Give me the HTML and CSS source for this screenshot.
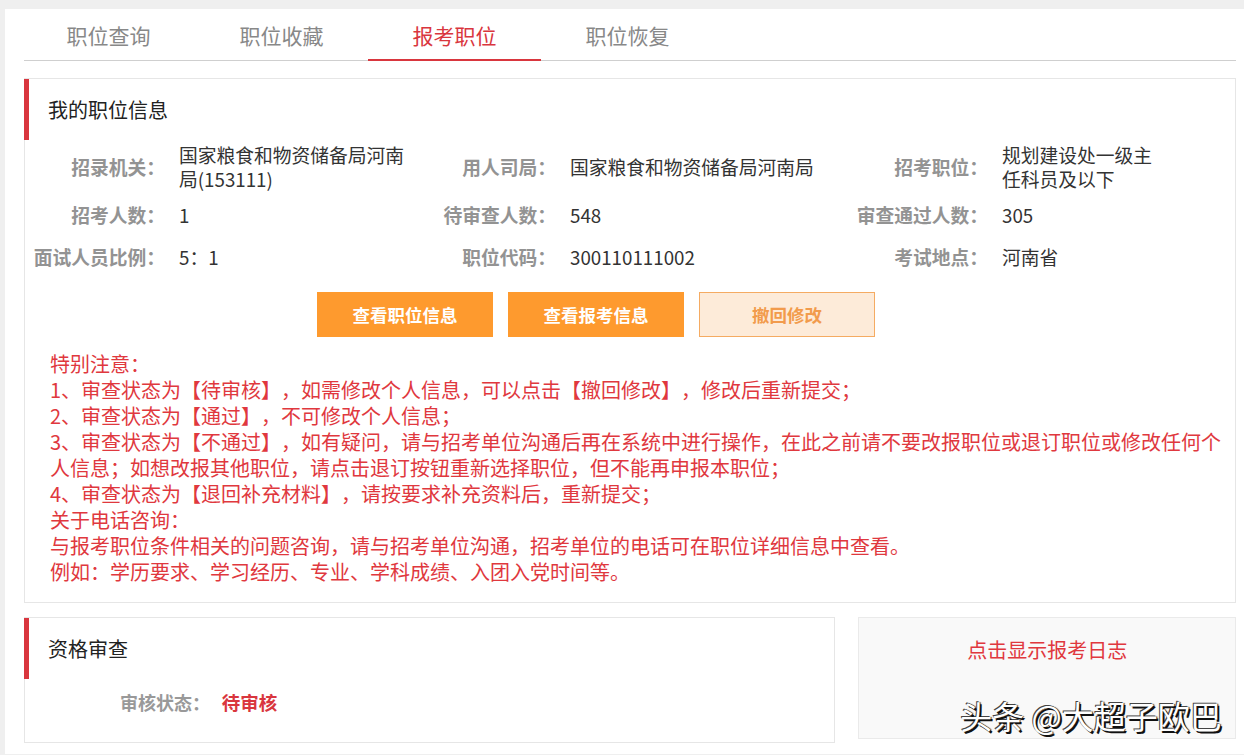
FILE: index.html
```html
<!DOCTYPE html>
<html lang="zh-CN">
<head>
    <meta charset="UTF-8">
    <meta name="viewport" content="width=device-width, initial-scale=1.0">
    <title>报考职位</title>
    <link rel="stylesheet" href="styles.css">
</head>
<body>
    <div class="page">
        <!-- Tabs -->
        <div class="tabs">
            <a class="tab">职位查询</a>
            <a class="tab">职位收藏</a>
            <a class="tab active">报考职位</a>
            <a class="tab">职位恢复</a>
        </div>

        <div class="card">
            <div class="card-head">我的职位信息</div>

            <div class="info-grid">
                <div class="label">招录机关：</div>
                <div class="value">国家粮食和物资储备局河南局(153111)</div>
                <div class="label">用人司局：</div>
                <div class="value">国家粮食和物资储备局河南局</div>
                <div class="label">招考职位：</div>
                <div class="value">规划建设处一级主任科员及以下</div>

                <div class="label">招考人数：</div>
                <div class="value">1</div>
                <div class="label">待审查人数：</div>
                <div class="value">548</div>
                <div class="label">审查通过人数：</div>
                <div class="value">305</div>

                <div class="label">面试人员比例：</div>
                <div class="value">5：1</div>
                <div class="label">职位代码：</div>
                <div class="value">300110111002</div>
                <div class="label">考试地点：</div>
                <div class="value">河南省</div>
            </div>

            <div class="actions">
                <button class="btn">查看职位信息</button>
                <button class="btn">查看报考信息</button>
                <button class="btn btn-light">撤回修改</button>
            </div>

            <div class="notes">
                <p>特别注意：</p>
                <p>1、审查状态为【待审核】，如需修改个人信息，可以点击【撤回修改】，修改后重新提交；</p>
                <p>2、审查状态为【通过】，不可修改个人信息；</p>
                <p>3、审查状态为【不通过】，如有疑问，请与招考单位沟通后再在系统中进行操作，在此之前请不要改报职位或退订职位或修改任何个人信息；如想改报其他职位，请点击退订按钮重新选择职位，但不能再申报本职位；</p>
                <p>4、审查状态为【退回补充材料】，请按要求补充资料后，重新提交；</p>
                <p>关于电话咨询：</p>
                <p>与报考职位条件相关的问题咨询，请与招考单位沟通，招考单位的电话可在职位详细信息中查看。</p>
                <p>例如：学历要求、学习经历、专业、学科成绩、入团入党时间等。</p>
            </div>
        </div>

        <div class="bottom-row">
            <div class="card review-card">
                <div class="card-head">资格审查</div>
                <div class="status-row">
                    <span class="status-label">审核状态：</span>
                    <span class="status-value">待审核</span>
                </div>
            </div>
            <div class="log-card">
                <a class="log-link">点击显示报考日志</a>
                <span class="watermark">头条 @大超子欧巴</span>
            </div>
        </div>
    </div>
</body>
</html>
```

FILE: styles.css
```css
body {
    margin: 0;
    padding: 0;
    background: #efefef;
    font-family: "Noto Sans CJK SC", "Noto Sans", sans-serif;
    color: #333;
    text-spacing-trim: space-all;
}

.page {
    margin: 9px 0 0 5px;
    padding: 0 8px 11px 19px;
    background: #fff;
    min-height: 735px;
    box-sizing: border-box;
}

/* Tabs */
.tabs {
    display: flex;
    border-bottom: 1px solid #cfcfcf;
}

.tab {
    width: 173px;
    padding: 13px 0 12px;
    line-height: 26px;
    font-size: 21px;
    color: #888;
    text-align: center;
    cursor: pointer;
}

.tab:first-child {
    margin-left: -2px;
}

.tab.active {
    color: #d9363e;
    border-bottom: 2px solid #d9363e;
    padding-bottom: 10px;
    margin-bottom: -1px;
}

/* Cards */
.card {
    margin-top: 17px;
    border: 1px solid #e6e6e6;
    background: #fff;
}

.card-head {
    height: 61px;
    line-height: 61px;
    margin-left: -1px;
    padding-left: 19px;
    border-left: 5px solid #d9363e;
    font-size: 20px;
    color: #222;
}

.info-grid {
    display: grid;
    grid-template-columns: 154px 232px 159px 270px 162px 160px;
    grid-template-rows: 54px 42px 42px;
    align-items: center;
}

.label {
    padding-right: 14px;
    text-align: right;
    font-size: 18.75px;
    font-weight: bold;
    color: #939393;
    line-height: 24px;
}

.value {
    font-size: 18.75px;
    line-height: 24px;
    color: #333;
}

.actions {
    display: flex;
    gap: 15px;
    margin-top: 14px;
    padding-left: 292px;
}

.btn {
    width: 176px;
    height: 45px;
    border: 1px solid #fe9a2e;
    background: #fe9a2e;
    color: #fff;
    font-family: inherit;
    font-size: 17.5px;
    font-weight: bold;
    cursor: pointer;
}

.btn-light {
    background: #fdebd9;
    border-color: #f5ab62;
    color: #f29b4c;
}

.notes {
    margin-top: 14px;
    padding: 0 0 17px 25px;
    color: #e0383e;
    font-size: 20px;
    line-height: 26px;
}

.notes p {
    margin: 0;
}

/* Bottom row */
.bottom-row {
    display: flex;
    align-items: flex-start;
    gap: 23px;
    margin-top: 14px;
}

.review-card {
    margin-top: 0;
    width: 812px;
    height: 126px;
    box-sizing: border-box;
}

.status-row {
    margin-top: 11px;
    padding-left: 95px;
    line-height: 24px;
    font-weight: bold;
}

.status-label {
    display: inline-block;
    width: 98px;
    font-size: 18px;
    color: #999;
}

.status-value {
    font-size: 18.5px;
    color: #d9363e;
}

.log-card {
    position: relative;
    width: 378px;
    height: 122px;
    box-sizing: border-box;
    border: 1px solid #eaeaea;
    background: #f9f9f9;
    padding-top: 19px;
    text-align: center;
}

.log-link {
    font-size: 20px;
    line-height: 26px;
    color: #e0383e;
    cursor: pointer;
}

.watermark {
    position: absolute;
    left: 101px;
    top: 78px;
    font-size: 32px;
    line-height: 38px;
    color: #fff;
    white-space: nowrap;
    text-shadow: 2px 2px 0 #111, -1px -1px 0 #444, 1px 0 1px #222;
}
```
